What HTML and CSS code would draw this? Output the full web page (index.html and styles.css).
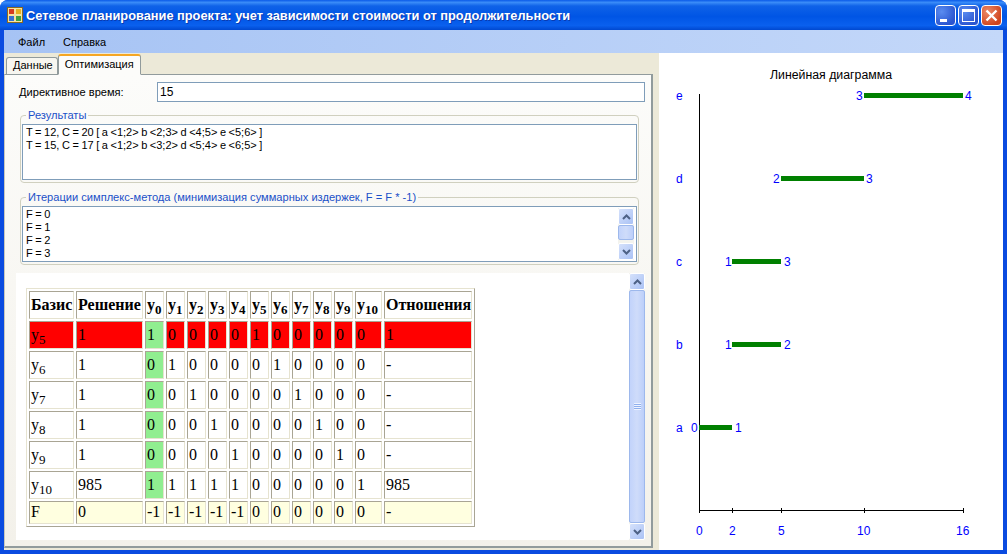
FILE: index.html
```html
<!DOCTYPE html>
<html>
<head>
  <title>Сетевое планирование проекта</title>
  <link rel="stylesheet" href="styles.css">
</head>
<body>
  <div class="window">
    <div class="titlebar">
      <svg class="app-icon" width="16" height="16" viewBox="0 0 16 16">
        <rect x="0.5" y="0.5" width="15" height="15" fill="#f4e3a0" stroke="#8a6a20"/>
        <rect x="2" y="2" width="5" height="5" fill="#d83a20"/>
        <rect x="9" y="2" width="5" height="5" fill="#e8b020"/>
        <rect x="2" y="9" width="5" height="5" fill="#3a70d0"/>
        <rect x="9" y="9" width="5" height="5" fill="#40a040"/>
      </svg>
      <span class="title">Сетевое планирование проекта: учет зависимости стоимости от продолжительности</span>
      <div class="caption-buttons">
        <div class="cap-btn"><span class="min-glyph"></span></div>
        <div class="cap-btn"><span class="max-glyph"></span></div>
        <div class="cap-btn close">
          <svg width="13" height="13" viewBox="0 0 13 13"><path d="M1.5 1.5 L11.5 11.5 M11.5 1.5 L1.5 11.5" stroke="#fff" stroke-width="2.4"/></svg>
        </div>
      </div>
    </div>

    <div class="menubar">
      <span class="menu-item">Файл</span>
      <span class="menu-item">Справка</span>
    </div>

    <div class="client">
      <div class="left-side">
        <div class="tabs">
          <div class="tab">Данные</div>
          <div class="tab active">Оптимизация</div>
        </div>
        <div class="tab-page">
          <div class="field-row">
            <label class="field-label">Директивное время:</label>
            <div class="textbox">15</div>
          </div>

          <fieldset class="group results">
            <legend>Результаты</legend>
            <div class="memo">
              <div>T = 12, C = 20 [ a &lt;1;2&gt; b &lt;2;3&gt; d &lt;4;5&gt; e &lt;5;6&gt; ]</div>
              <div>T = 15, C = 17 [ a &lt;1;2&gt; b &lt;3;2&gt; d &lt;5;4&gt; e &lt;6;5&gt; ]</div>
            </div>
          </fieldset>

          <fieldset class="group iterations">
            <legend>Итерации симплекс-метода (минимизация суммарных издержек, F = F * -1)</legend>
            <div class="memo list">
              <div class="list-lines">
                <div>F = 0</div>
                <div>F = 1</div>
                <div>F = 2</div>
                <div>F = 3</div>
              </div>
              <div class="scrollbar">
                <div class="sb-btn"><svg width="9" height="6" viewBox="0 0 9 6"><path d="M1 5 L4.5 1.5 L8 5" class="chev"/></svg></div>
                <div class="sb-thumb small"></div>
                <div class="sb-track"></div>
                <div class="sb-btn"><svg width="9" height="6" viewBox="0 0 9 6"><path d="M1 1 L4.5 4.5 L8 1" class="chev"/></svg></div>
              </div>
            </div>
          </fieldset>

          <div class="browser">
            <div class="browser-content">
              <table class="simplex">
                <colgroup>
                  <col class="c-basis"><col class="c-sol">
                  <col class="c-y"><col class="c-y"><col class="c-y"><col class="c-y"><col class="c-y"><col class="c-y">
                  <col class="c-y"><col class="c-y"><col class="c-y"><col class="c-y">
                  <col class="c-y10"><col class="c-ratio">
                </colgroup>
                <tr class="head">
                  <th>Базис</th><th>Решение</th>
                  <th>y<sub>0</sub></th><th>y<sub>1</sub></th><th>y<sub>2</sub></th><th>y<sub>3</sub></th><th>y<sub>4</sub></th>
                  <th>y<sub>5</sub></th><th>y<sub>6</sub></th><th>y<sub>7</sub></th><th>y<sub>8</sub></th><th>y<sub>9</sub></th>
                  <th>y<sub>10</sub></th><th>Отношения</th>
                </tr>
                <tr class="pivot">
                  <td>y<sub>5</sub></td><td>1</td><td class="key">1</td><td>0</td><td>0</td><td>0</td><td>0</td><td>1</td><td>0</td><td>0</td><td>0</td><td>0</td><td>0</td><td>1</td>
                </tr>
                <tr>
                  <td>y<sub>6</sub></td><td>1</td><td class="key">0</td><td>1</td><td>0</td><td>0</td><td>0</td><td>0</td><td>1</td><td>0</td><td>0</td><td>0</td><td>0</td><td>-</td>
                </tr>
                <tr>
                  <td>y<sub>7</sub></td><td>1</td><td class="key">0</td><td>0</td><td>1</td><td>0</td><td>0</td><td>0</td><td>0</td><td>1</td><td>0</td><td>0</td><td>0</td><td>-</td>
                </tr>
                <tr>
                  <td>y<sub>8</sub></td><td>1</td><td class="key">0</td><td>0</td><td>0</td><td>1</td><td>0</td><td>0</td><td>0</td><td>0</td><td>1</td><td>0</td><td>0</td><td>-</td>
                </tr>
                <tr>
                  <td>y<sub>9</sub></td><td>1</td><td class="key">0</td><td>0</td><td>0</td><td>0</td><td>1</td><td>0</td><td>0</td><td>0</td><td>0</td><td>1</td><td>0</td><td>-</td>
                </tr>
                <tr>
                  <td>y<sub>10</sub></td><td>985</td><td class="key">1</td><td>1</td><td>1</td><td>1</td><td>1</td><td>0</td><td>0</td><td>0</td><td>0</td><td>0</td><td>1</td><td>985</td>
                </tr>
                <tr class="func">
                  <td>F</td><td>0</td><td>-1</td><td>-1</td><td>-1</td><td>-1</td><td>-1</td><td>0</td><td>0</td><td>0</td><td>0</td><td>0</td><td>0</td><td>-</td>
                </tr>
              </table>
            </div>
            <div class="scrollbar tall">
              <div class="sb-btn"><svg width="9" height="6" viewBox="0 0 9 6"><path d="M1 5 L4.5 1.5 L8 5" class="chev"/></svg></div>
              <div class="sb-thumb grow"><span class="grip"></span></div>
              <div class="sb-btn"><svg width="9" height="6" viewBox="0 0 9 6"><path d="M1 1 L4.5 4.5 L8 1" class="chev"/></svg></div>
            </div>
          </div>
        </div>
      </div>

      <div class="chart-panel">
        <svg class="chart" width="344" height="497" viewBox="659 53 344 497">
          <text class="chart-title" x="831" y="79">Линейная диаграмма</text>
          <path class="axis" d="M699.5 94 V513 M699 510.5 H964 M732.5 508 V513 M781.5 508 V513 M864.5 508 V513 M963.5 508 V513"/>

          <rect class="bar" x="864" y="93" width="99" height="5"/>
          <rect class="bar" x="781" y="176" width="83" height="5"/>
          <rect class="bar" x="732" y="259" width="49" height="5"/>
          <rect class="bar" x="732" y="342" width="49" height="5"/>
          <rect class="bar" x="699" y="425" width="33" height="5"/>

          <text class="lbl" x="676" y="100">e</text>
          <text class="lbl" x="676" y="183">d</text>
          <text class="lbl" x="676" y="266">c</text>
          <text class="lbl" x="676" y="349">b</text>
          <text class="lbl" x="676" y="432">a</text>

          <text class="lbl" x="856" y="100">3</text><text class="lbl" x="965" y="100">4</text>
          <text class="lbl" x="773" y="183">2</text><text class="lbl" x="866" y="183">3</text>
          <text class="lbl" x="725" y="266">1</text><text class="lbl" x="784" y="266">3</text>
          <text class="lbl" x="725" y="349">1</text><text class="lbl" x="784" y="349">2</text>
          <text class="lbl" x="691" y="432">0</text><text class="lbl" x="735" y="432">1</text>

          <text class="lbl" x="696" y="535">0</text>
          <text class="lbl" x="729" y="535">2</text>
          <text class="lbl" x="778" y="535">5</text>
          <text class="lbl" x="857" y="535">10</text>
          <text class="lbl" x="956" y="535">16</text>
        </svg>
      </div>
    </div>
  </div>
</body>
</html>
```

FILE: styles.css
```css
html, body {
  margin: 0;
  padding: 0;
}

body {
  width: 1007px;
  height: 554px;
  overflow: hidden;
  font-family: "Liberation Sans", Arial, sans-serif;
  font-size: 12px;
  color: #000;
}

.window {
  width: 1007px;
  height: 554px;
  box-sizing: border-box;
  display: flex;
  flex-direction: column;
  background: #0a4be0;
  border-radius: 8px 8px 0 0;
  overflow: hidden;
}

/* заголовок окна */
.titlebar {
  height: 30px;
  flex: none;
  display: flex;
  align-items: center;
  padding: 0 5px 0 7px;
  background: linear-gradient(to bottom, #0a5ae8 0%, #3a8cf8 8%, #0f62e8 20%, #0055e5 55%, #0a60ee 85%, #0048d0 100%);
}

.app-icon {
  flex: none;
  margin-right: 3px;
}

.title {
  flex: 1;
  color: #fff;
  font-size: 12.8px;
  font-weight: bold;
  white-space: nowrap;
  text-shadow: 1px 1px 0 #0a3ab0;
}

.caption-buttons {
  display: flex;
  gap: 2px;
}

.cap-btn {
  width: 21px;
  height: 21px;
  box-sizing: border-box;
  border: 1px solid #fff;
  border-radius: 4px;
  background: radial-gradient(circle at 30% 30%, #5a8cf0, #2a55d0 75%);
  position: relative;
  display: flex;
  align-items: center;
  justify-content: center;
}

.cap-btn.close {
  background: radial-gradient(circle at 30% 30%, #ec8a68, #d0451e 75%);
}

.min-glyph {
  position: absolute;
  left: 4px;
  bottom: 3px;
  width: 7px;
  height: 3px;
  background: #fff;
}

.max-glyph {
  width: 13px;
  height: 13px;
  box-sizing: border-box;
  border: 1px solid #fff;
  border-top-width: 3px;
}

/* меню */
.menubar {
  height: 23px;
  flex: none;
  margin: 0 4px;
  padding-left: 7px;
  display: flex;
  align-items: center;
  background: linear-gradient(to right, #a6c3f4, #c4d8f9);
}

.menu-item {
  font-size: 11px;
  padding: 0 7px;
  margin-right: 4px;
}

.client {
  flex: 1;
  display: flex;
  margin: 0 4px 4px;
  min-height: 0;
}

.left-side {
  width: 655px;
  flex: none;
  background: #ece9d8;
  display: flex;
  flex-direction: column;
  padding-bottom: 2px;
  box-sizing: border-box;
}

.tabs {
  height: 21px;
  flex: none;
  display: flex;
  align-items: flex-end;
  padding-left: 2px;
}

.tab {
  height: 17px;
  box-sizing: border-box;
  padding: 1px 4px 0 6px;
  font-size: 11px;
  line-height: 13px;
  border: 1px solid #919b9c;
  border-bottom: none;
  border-radius: 3px 3px 0 0;
  background: #f7f6f0;
}

.tab.active {
  height: 21px;
  padding: 2px 6px 0;
  background: #fcfcfa;
  border-top: 2px solid #f5a623;
  margin-bottom: -1px;
  position: relative;
  z-index: 1;
  border-bottom: 1px solid #fcfcfa;
}

.tab-page {
  flex: 1;
  width: 649px;
  box-sizing: border-box;
  border: 1px solid #919b9c;
  border-left-color: #c8c8bc;
  border-right-width: 2px;
  border-bottom-width: 2px;
  padding: 7px 6px 6px 11px;
  background: linear-gradient(to bottom, #fcfcfa, #f3f1ea);
  display: flex;
  flex-direction: column;
  min-height: 0;
}

.field-row {
  display: flex;
  align-items: center;
  height: 20px;
  flex: none;
  margin-bottom: 5px;
}

.field-label {
  width: 141px;
  padding-left: 3px;
  box-sizing: border-box;
  font-size: 11.1px;
  flex: none;
}

.textbox {
  flex: 1;
  height: 20px;
  box-sizing: border-box;
  border: 1px solid #7f9db9;
  background: #fff;
  padding: 2px;
  font-size: 12px;
  line-height: 14px;
}

.group {
  margin: 0 6px 0 4px;
  padding: 0 1px 2px;
  border: 1px solid #d0d0bf;
  border-radius: 4px;
  flex: none;
  min-width: 0;
}

.group legend {
  color: #1a50c8;
  font-size: 11.1px;
  line-height: 17px;
  padding: 0 2px;
  margin-left: 4px;
  white-space: nowrap;
}

.results {
  margin-bottom: 6px;
}

.memo {
  box-sizing: border-box;
  height: 56px;
  border: 1px solid #7f9db9;
  background: #fff;
  padding: 1px 3px;
  font-size: 11px;
  word-spacing: -0.5px;
  line-height: 13px;
  white-space: nowrap;
}

.memo.list {
  display: flex;
  padding: 1px 2px 1px 3px;
}

.list-lines {
  flex: 1;
}

/* полосы прокрутки */
.scrollbar {
  width: 16px;
  flex: none;
  display: flex;
  flex-direction: column;
  background: #f3f3ee;
}

.sb-btn {
  height: 17px;
  flex: none;
  box-sizing: border-box;
  border: 1px solid #fff;
  border-radius: 2px;
  background: linear-gradient(135deg, #d5e1fb, #aac2f5);
  display: flex;
  align-items: center;
  justify-content: center;
}

.chev {
  fill: none;
  stroke: #4d6185;
  stroke-width: 2;
}

.sb-thumb {
  box-sizing: border-box;
  border: 1px solid #9db8ec;
  border-radius: 2px;
  background: linear-gradient(to right, #c2d3fb, #cfdcfa 50%, #bccffa);
}

.sb-thumb.small {
  height: 15px;
  flex: none;
}

.sb-thumb.grow {
  flex: 1;
  display: flex;
  align-items: center;
  justify-content: center;
}

.grip {
  width: 7px;
  height: 7px;
  background: repeating-linear-gradient(to bottom, #eef3ff 0, #eef3ff 1px, #8fb0ee 1px, #8fb0ee 2px);
}

.sb-track {
  flex: 1;
}

.browser {
  flex: 1;
  margin: 8px 0 0;
  min-height: 0;
  display: flex;
  background: #fff;
}

.browser-content {
  flex: 1;
  padding: 15px 0 0 10px;
}

.simplex {
  border-collapse: separate;
  border-spacing: 2px;
  table-layout: fixed;
  width: 449px;
  border: 1px solid;
  border-color: #e6e3d0 #a9a594 #a9a594 #e6e3d0;
  font-family: "Liberation Serif", "Times New Roman", serif;
  font-size: 16px;
  color: #000;
}

.c-basis { width: 45px; }
.c-sol { width: 67px; }
.c-y { width: 19px; }
.c-y10 { width: 27px; }
.c-ratio { width: 88px; }

.simplex th, .simplex td {
  box-sizing: border-box;
  height: 28px;
  padding: 0 1px 1px;
  border: 1px solid;
  border-color: #a9a594 #e6e3d0 #e6e3d0 #a9a594;
  text-align: left;
  white-space: nowrap;
  font-size: 16px;
  line-height: 18px;
  overflow: hidden;
}

.simplex th {
  font-weight: bold;
}

.simplex sub {
  font-size: 13px;
  line-height: 0;
}

.simplex .pivot td { background: #ff0000; }
.simplex .pivot td.key, .simplex td.key { background: #90ee90; }
.simplex .func td { background: #ffffe0; height: 23px; }

/* диаграмма */
.chart-panel {
  flex: 1;
  background: #fff;
}

.chart {
  display: block;
}

.chart-title {
  font-size: 12.3px;
  fill: #000;
  text-anchor: middle;
}

.axis {
  stroke: #000;
  stroke-width: 1;
  fill: none;
}

.bar {
  fill: #008000;
}

.lbl {
  font-size: 12px;
  fill: #0000ff;
}
```
